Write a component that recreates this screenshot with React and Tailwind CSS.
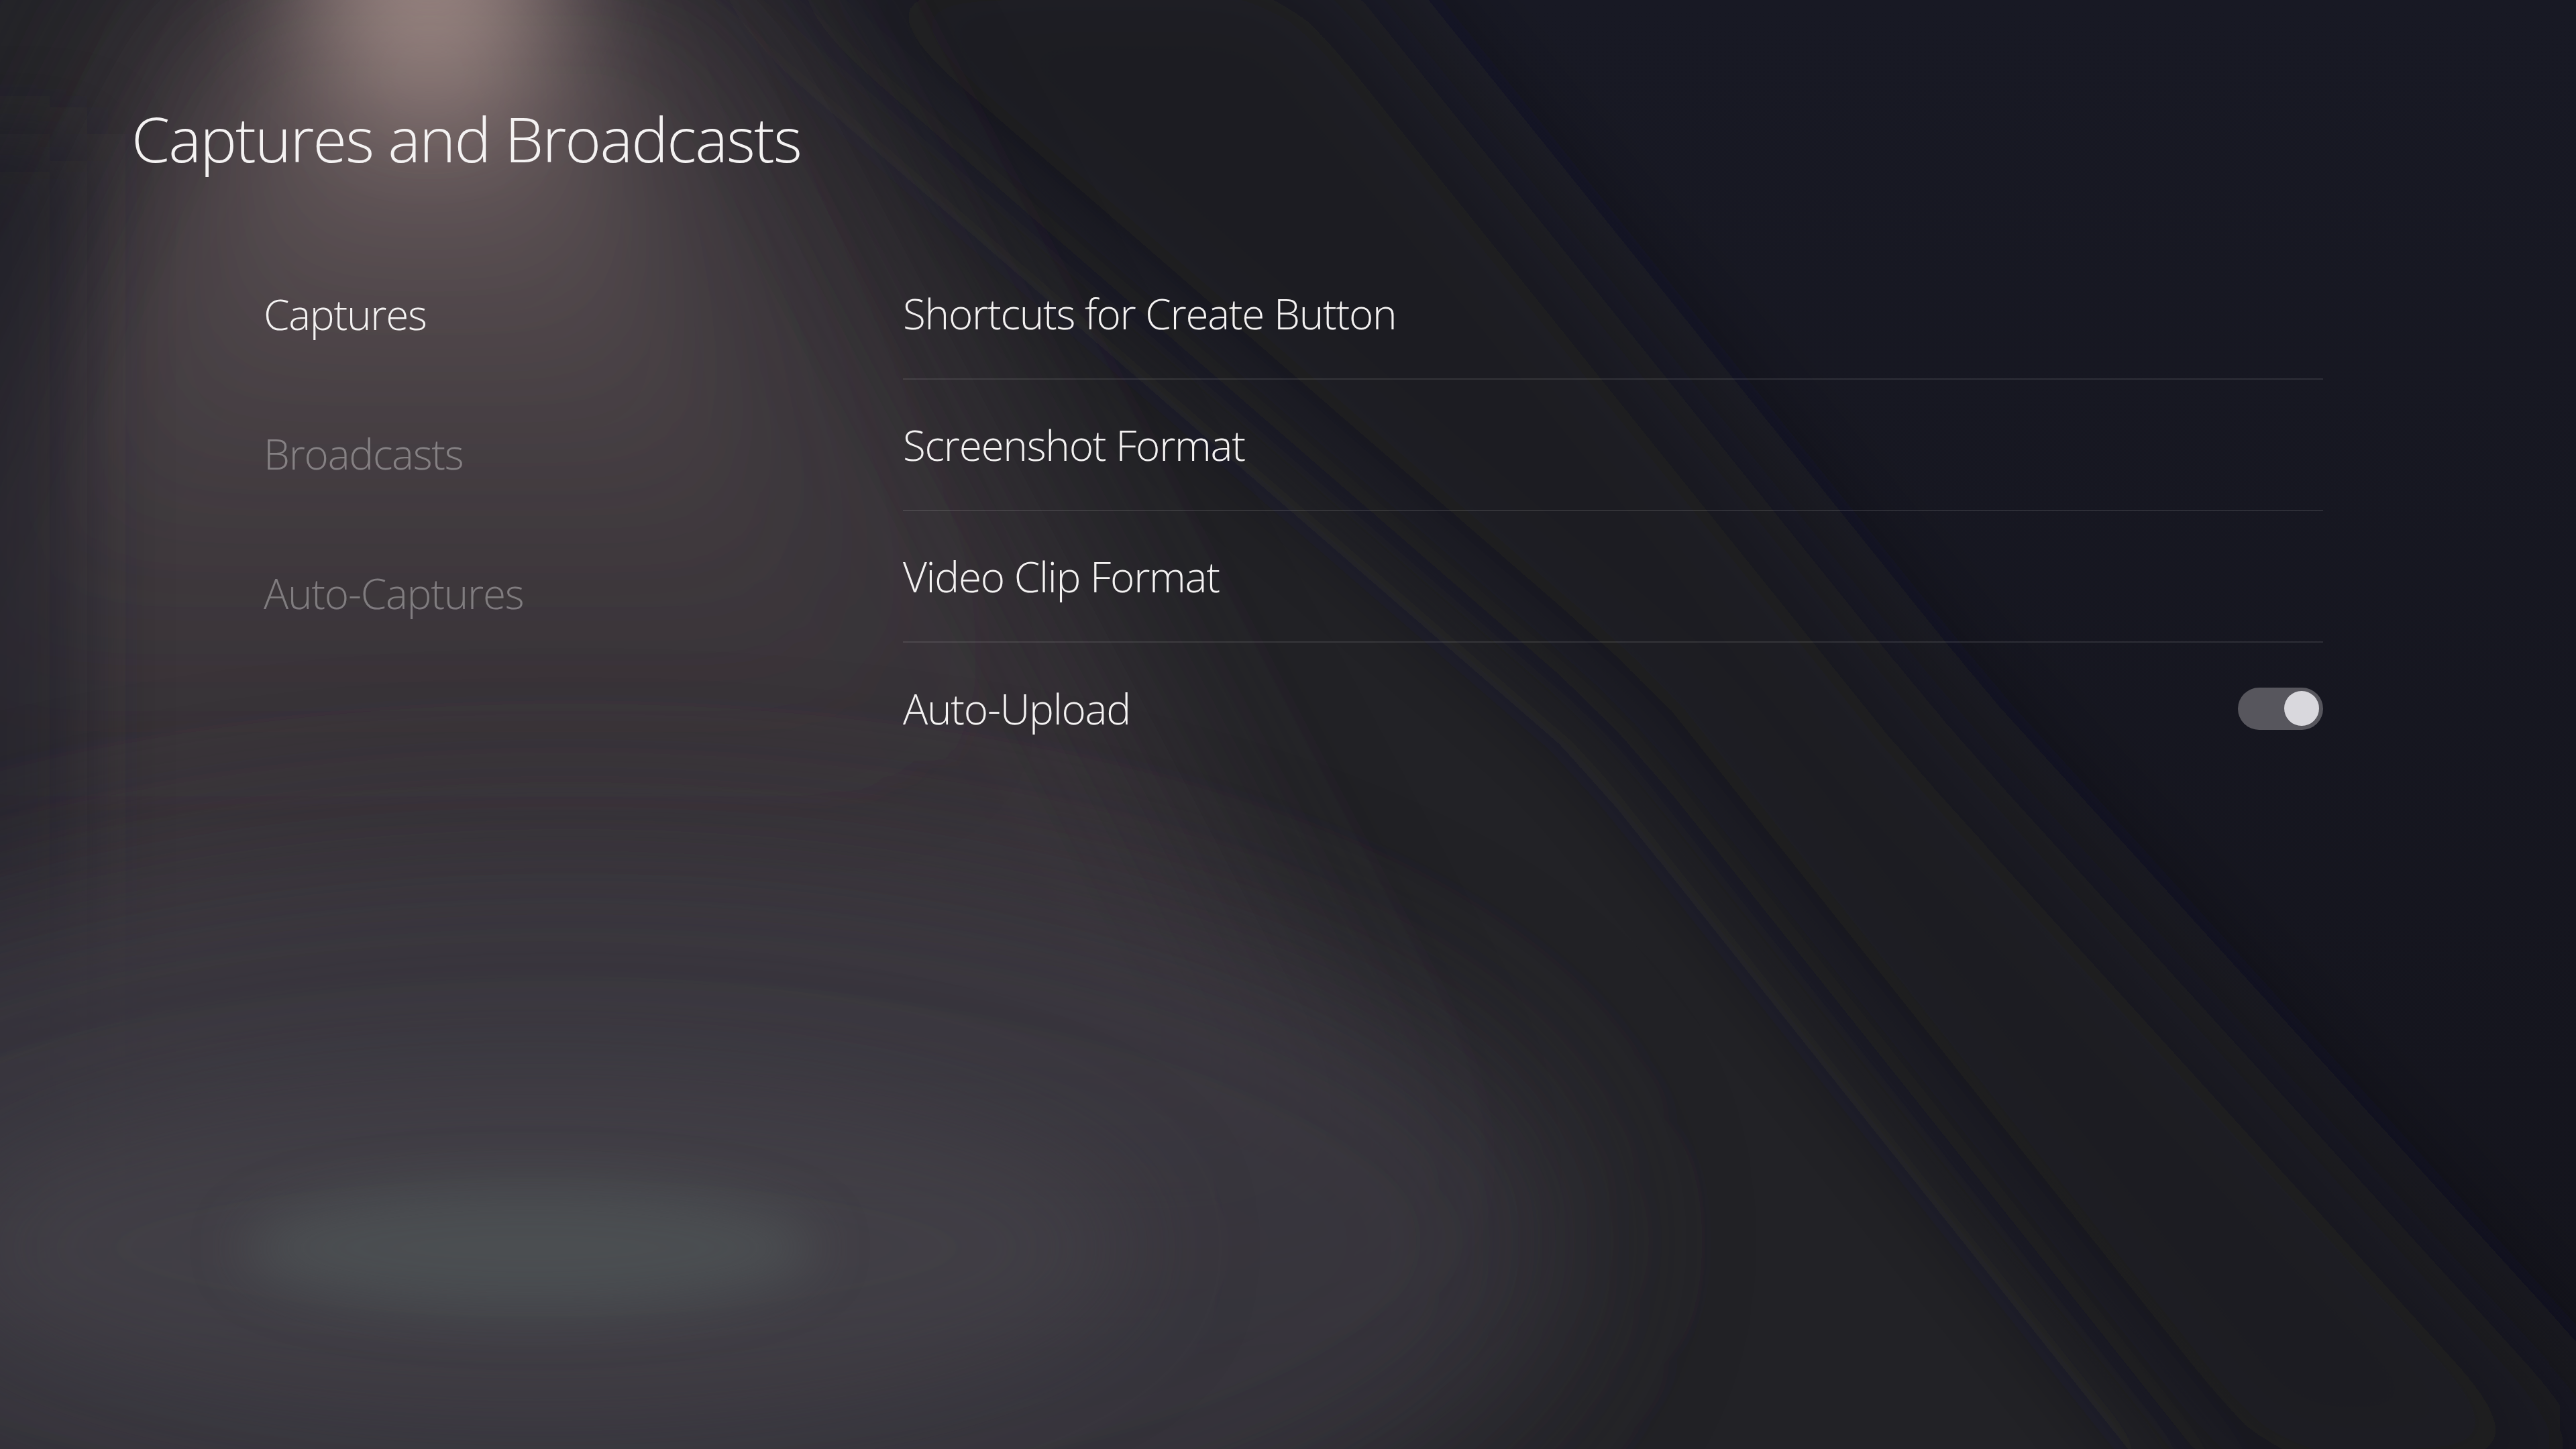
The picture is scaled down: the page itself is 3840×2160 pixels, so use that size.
import React from "react";

const captureNav = [
  { label: "Captures", active: true },
  { label: "Broadcasts", active: false },
  { label: "Auto-Captures", active: false },
];

const settings = [
  { label: "Shortcuts for Create Button" },
  { label: "Screenshot Format" },
  { label: "Video Clip Format" },
  { label: "Auto-Upload", toggle: true },
];

// Spotlight backdrop, drawn once behind the settings screen
function Backdrop() {
  return (
    <svg
      className="absolute inset-0 h-full w-full"
      viewBox="0 0 3840 2160"
      preserveAspectRatio="none"
      aria-hidden="true"
    >
      <defs>
        <filter id="b40" x="-50%" y="-50%" width="200%" height="200%">
          <feGaussianBlur stdDeviation="40" />
        </filter>
        <filter id="b60" x="-50%" y="-50%" width="200%" height="200%">
          <feGaussianBlur stdDeviation="60" />
        </filter>
        <filter id="b90" x="-50%" y="-50%" width="200%" height="200%">
          <feGaussianBlur stdDeviation="90" />
        </filter>
        <filter id="b130" x="-50%" y="-50%" width="200%" height="200%">
          <feGaussianBlur stdDeviation="130" />
        </filter>
        <linearGradient id="base" x1="0" y1="0" x2="0" y2="1">
          <stop offset="0" stopColor="#181924" />
          <stop offset="1" stopColor="#14141c" />
        </linearGradient>
        <linearGradient id="beam" x1="0" y1="0" x2="0" y2="1">
          <stop offset="0" stopColor="#a88f8a" stopOpacity="0.9" />
          <stop offset="0.3" stopColor="#6a5d5f" stopOpacity="0.65" />
          <stop offset="1" stopColor="#403a3e" stopOpacity="0" />
        </linearGradient>
      </defs>
      <rect width="3840" height="2160" fill="url(#base)" />
      {/* lit side of the room */}
      <polygon points="-100,-100 1050,-100 2410,1080 3350,2260 -100,2260" fill="#222128" filter="url(#b60)" />
      {/* dim middle band */}
      <polygon points="1050,-100 1950,-100 2900,1080 3900,2180 3900,2260 3350,2260 2410,1080" fill="#1c1c23" filter="url(#b90)" />
      {/* warm cone */}
      <polygon points="260,-100 1100,-100 2100,1800 -650,1800" fill="#3b353a" opacity="0.85" filter="url(#b130)" />
      <polygon points="520,-60 770,-60 1500,1200 -300,1200" fill="url(#beam)" filter="url(#b130)" />
      <ellipse cx="640" cy="-60" rx="180" ry="200" fill="#c2a9a1" opacity="0.55" filter="url(#b90)" />
      {/* darker left edge */}
      <rect x="-200" y="200" width="330" height="1700" fill="#1f1e26" opacity="0.5" filter="url(#b60)" />
      {/* floor haze */}
      <ellipse cx="850" cy="1850" rx="1500" ry="600" fill="#3a393f" opacity="0.85" filter="url(#b130)" />
      <ellipse cx="800" cy="1860" rx="900" ry="260" fill="#46444b" opacity="0.6" filter="url(#b90)" />
      <ellipse cx="790" cy="1860" rx="430" ry="95" fill="#535b5c" opacity="0.55" filter="url(#b40)" />
    </svg>
  );
}

function Toggle({ on }) {
  return (
    <div className="flex h-[63px] w-[127px] items-center justify-end rounded-full bg-[#57565d] pr-[6px]">
      <div className={on ? "h-[52px] w-[52px] rounded-full bg-[#d9d8dd]" : "h-[52px] w-[52px] rounded-full bg-[#9a9aa0]"} />
    </div>
  );
}

export default function App() {
  return (
    <div className="relative min-h-screen w-full overflow-hidden bg-[#181924] font-['Open_Sans','Noto_Sans',sans-serif] font-light text-[#f4f2f2]">
      <Backdrop />

      <div className="relative flex flex-col pt-[161px]">
        {/* Page title */}
        <h1 className="pl-[196px] text-[92px] leading-none tracking-[-0.02em]">
          Captures and Broadcasts
        </h1>

        <div className="mt-[117px] flex pl-[393px]">
          {/* Section nav */}
          <nav className="flex w-[953px] flex-col gap-[12px]">
            {captureNav.map((item) => (
              <div
                key={item.label}
                className={
                  item.active
                    ? "flex h-[196px] items-center text-[62px] leading-none tracking-[-0.02em] text-[#f4f2f2]"
                    : "flex h-[196px] items-center text-[62px] leading-none tracking-[-0.02em] text-white/35"
                }
              >
                {item.label}
              </div>
            ))}
          </nav>

          {/* Settings list */}
          <div className="flex w-[2117px] flex-col">
            {settings.map((row, i) => (
              <div
                key={row.label}
                className={
                  i < settings.length - 1
                    ? "flex h-[196px] items-center justify-between border-b-2 border-white/10"
                    : "flex h-[196px] items-center justify-between"
                }
              >
                <span className="text-[62px] leading-none tracking-[-0.02em]">{row.label}</span>
                {row.toggle && <Toggle on />}
              </div>
            ))}
          </div>
        </div>
      </div>
    </div>
  );
}
